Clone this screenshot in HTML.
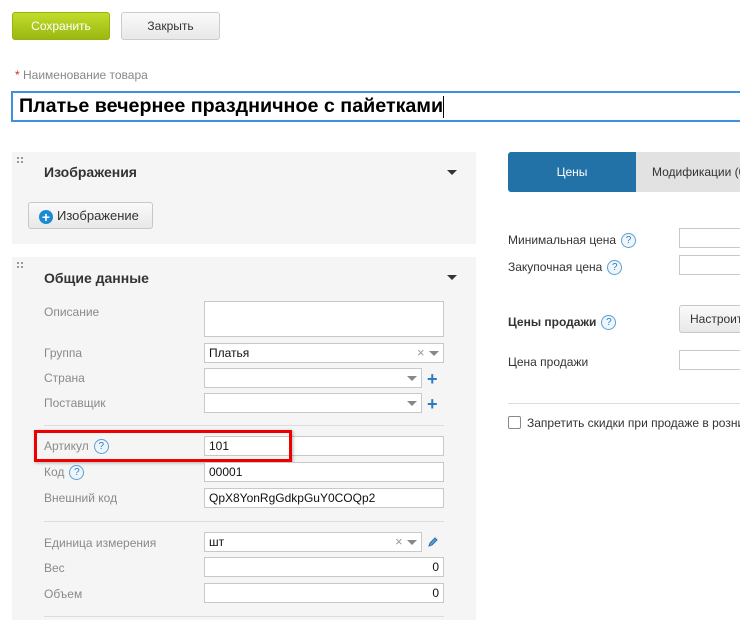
<!DOCTYPE html>
<html><head><meta charset="utf-8"><style>
*{box-sizing:border-box;margin:0;padding:0}
body{width:740px;height:620px;overflow:hidden;background:#fff;font-family:"Liberation Sans",Arial,sans-serif;font-size:12px;color:#333;position:relative}
.a{position:absolute}
.inp{position:absolute;background:#fff;border:1px solid #c8c8c8;height:20px;font-size:12px;color:#111;padding:2px 4px;line-height:15px}
.lbl{position:absolute;color:#8a8a8a;font-size:12px}
.q{display:inline-block;width:15px;height:15px;border:1px solid #5a9fd4;border-radius:50%;color:#2a7bbf;font-size:10px;text-align:center;line-height:13px;background:#eef6fc;vertical-align:middle;margin-left:5px}
.sep{position:absolute;height:1px;background:#ddd}
.tri{position:absolute;width:0;height:0;border-left:5px solid transparent;border-right:5px solid transparent;border-top:5px solid #333}
.dd{position:absolute;width:0;height:0;border-left:5px solid transparent;border-right:5px solid transparent;border-top:5px solid #888}
.plus{position:absolute;color:#2a7bbf;font-size:18px;font-weight:bold;line-height:14px}
</style></head><body>
<div class="a" style="left:12px;top:12px;width:98px;height:28px;border-radius:3px;background:linear-gradient(#c2dc2c,#9ab812);border:1px solid #98b20e;color:#fff;text-align:center;line-height:26px">Сохранить</div>
<div class="a" style="left:121px;top:12px;width:99px;height:28px;border-radius:3px;background:linear-gradient(#fafafa,#e8e8e8);border:1px solid #ccc;color:#333;text-align:center;line-height:26px">Закрыть</div>
<div class="a" style="left:15px;top:68px;color:#888"><span style="color:#d22">*</span> Наименование товара</div>
<div class="a" style="left:11px;top:91px;width:740px;height:31px;border:2px solid #3d92e0;font-size:19.7px;font-weight:bold;color:#000;padding:1px 6px;line-height:25px">Платье вечернее праздничное с пайетками<span style="display:inline-block;width:1px;height:22px;background:#000;vertical-align:middle"></span></div>

<div class="a" style="left:12px;top:152px;width:464px;height:92px;background:#f5f5f5"></div>
<svg class="a" style="left:17px;top:157px" width="6" height="6"><rect x="0" y="0" width="2" height="2" fill="#999"/><rect x="4" y="0" width="2" height="2" fill="#999"/><rect x="0" y="4" width="2" height="2" fill="#999"/><rect x="4" y="4" width="2" height="2" fill="#999"/></svg>
<div class="a" style="left:44px;top:164px;font-size:14px;font-weight:bold;color:#333">Изображения</div>
<div class="tri" style="left:447px;top:170px"></div>
<div class="a" style="left:28px;top:202px;width:125px;height:27px;border:1px solid #c8c8c8;border-radius:3px;background:linear-gradient(#fafafa,#e8e8e8);font-size:13px;line-height:25px;padding-left:10px"><span style="display:inline-block;width:14px;height:14px;border-radius:50%;background:#1a8ad4;color:#fff;font-weight:bold;text-align:center;line-height:14px;font-size:14px;vertical-align:-2px;margin-right:4px">+</span>Изображение</div>

<div class="a" style="left:12px;top:257px;width:464px;height:363px;background:#f5f5f5"></div>
<svg class="a" style="left:17px;top:262px" width="6" height="6"><rect x="0" y="0" width="2" height="2" fill="#999"/><rect x="4" y="0" width="2" height="2" fill="#999"/><rect x="0" y="4" width="2" height="2" fill="#999"/><rect x="4" y="4" width="2" height="2" fill="#999"/></svg>
<div class="a" style="left:44px;top:270px;font-size:14px;font-weight:bold;color:#333">Общие данные</div>
<div class="tri" style="left:447px;top:275px"></div>

<div class="lbl" style="left:44px;top:305px">Описание</div>
<div class="inp" style="left:204px;top:301px;width:240px;height:36px"></div>
<div class="lbl" style="left:44px;top:346px">Группа</div>
<div class="inp" style="left:204px;top:343px;width:240px">Платья</div>
<div class="a" style="left:417px;top:345px;color:#999;font-size:13px">×</div><div class="dd" style="left:429px;top:351px"></div>
<div class="lbl" style="left:44px;top:371px">Страна</div>
<div class="inp" style="left:204px;top:368px;width:218px"></div><div class="dd" style="left:407px;top:376px"></div><div class="plus" style="left:427px;top:372px">+</div>
<div class="lbl" style="left:44px;top:396px">Поставщик</div>
<div class="inp" style="left:204px;top:393px;width:218px"></div><div class="dd" style="left:407px;top:401px"></div><div class="plus" style="left:427px;top:397px">+</div>
<div class="sep" style="left:44px;top:425px;width:400px"></div>
<div class="lbl" style="left:44px;top:439px">Артикул<span class="q">?</span></div>
<div class="inp" style="left:204px;top:436px;width:240px">101</div>
<div class="a" style="left:34px;top:430px;width:258px;height:32px;border:3px solid #e00;box-shadow:1px 1px 3px rgba(0,0,0,.3)"></div>
<div class="lbl" style="left:44px;top:465px">Код<span class="q">?</span></div>
<div class="inp" style="left:204px;top:462px;width:240px">00001</div>
<div class="lbl" style="left:44px;top:491px">Внешний код</div>
<div class="inp" style="left:204px;top:488px;width:240px">QpX8YonRgGdkpGuY0COQp2</div>
<div class="sep" style="left:44px;top:521px;width:400px"></div>
<div class="lbl" style="left:44px;top:536px">Единица измерения</div>
<div class="inp" style="left:204px;top:532px;width:218px">шт</div>
<div class="a" style="left:395px;top:534px;color:#999;font-size:13px">×</div><div class="dd" style="left:407px;top:540px"></div>
<svg class="a" style="left:427px;top:536px" width="12" height="12" viewBox="0 0 12 12"><path d="M2 10 L3 7 L8 2 L10 4 L5 9 Z" fill="#5a9fd4" stroke="#2a6fb0" stroke-width="1"/></svg>
<div class="lbl" style="left:44px;top:561px">Вес</div>
<div class="inp" style="left:204px;top:557px;width:240px;text-align:right">0</div>
<div class="lbl" style="left:44px;top:587px">Объем</div>
<div class="inp" style="left:204px;top:583px;width:240px;text-align:right">0</div>
<div class="sep" style="left:44px;top:616px;width:400px"></div>

<div class="a" style="left:508px;top:152px;width:128px;height:40px;background:#2272a8;border-radius:3px 0 0 3px;color:#fff;text-align:center;line-height:40px">Цены</div>
<div class="a" style="left:636px;top:152px;width:110px;height:40px;background:#e2e2e2;color:#333;line-height:40px;padding-left:16px;white-space:nowrap">Модификации (0)</div>
<div class="a" style="left:508px;top:233px">Минимальная цена<span class="q">?</span></div>
<div class="inp" style="left:679px;top:228px;width:70px"></div>
<div class="a" style="left:508px;top:260px">Закупочная цена<span class="q">?</span></div>
<div class="inp" style="left:679px;top:255px;width:70px"></div>
<div class="a" style="left:508px;top:315px;font-weight:bold">Цены продажи<span class="q" style="font-weight:normal">?</span></div>
<div class="a" style="left:679px;top:305px;width:70px;height:28px;border:1px solid #c8c8c8;border-radius:3px;background:linear-gradient(#fafafa,#e8e8e8);line-height:26px;padding-left:10px;white-space:nowrap">Настроить</div>
<div class="a" style="left:508px;top:355px">Цена продажи</div>
<div class="inp" style="left:679px;top:350px;width:70px"></div>
<div class="sep" style="left:508px;top:403px;width:240px"></div>
<div class="a" style="left:508px;top:416px;width:13px;height:13px;border:1px solid #888;border-radius:2px;background:#fff"></div>
<div class="a" style="left:527px;top:416px;white-space:nowrap">Запретить скидки при продаже в рознице</div>
</body></html>
